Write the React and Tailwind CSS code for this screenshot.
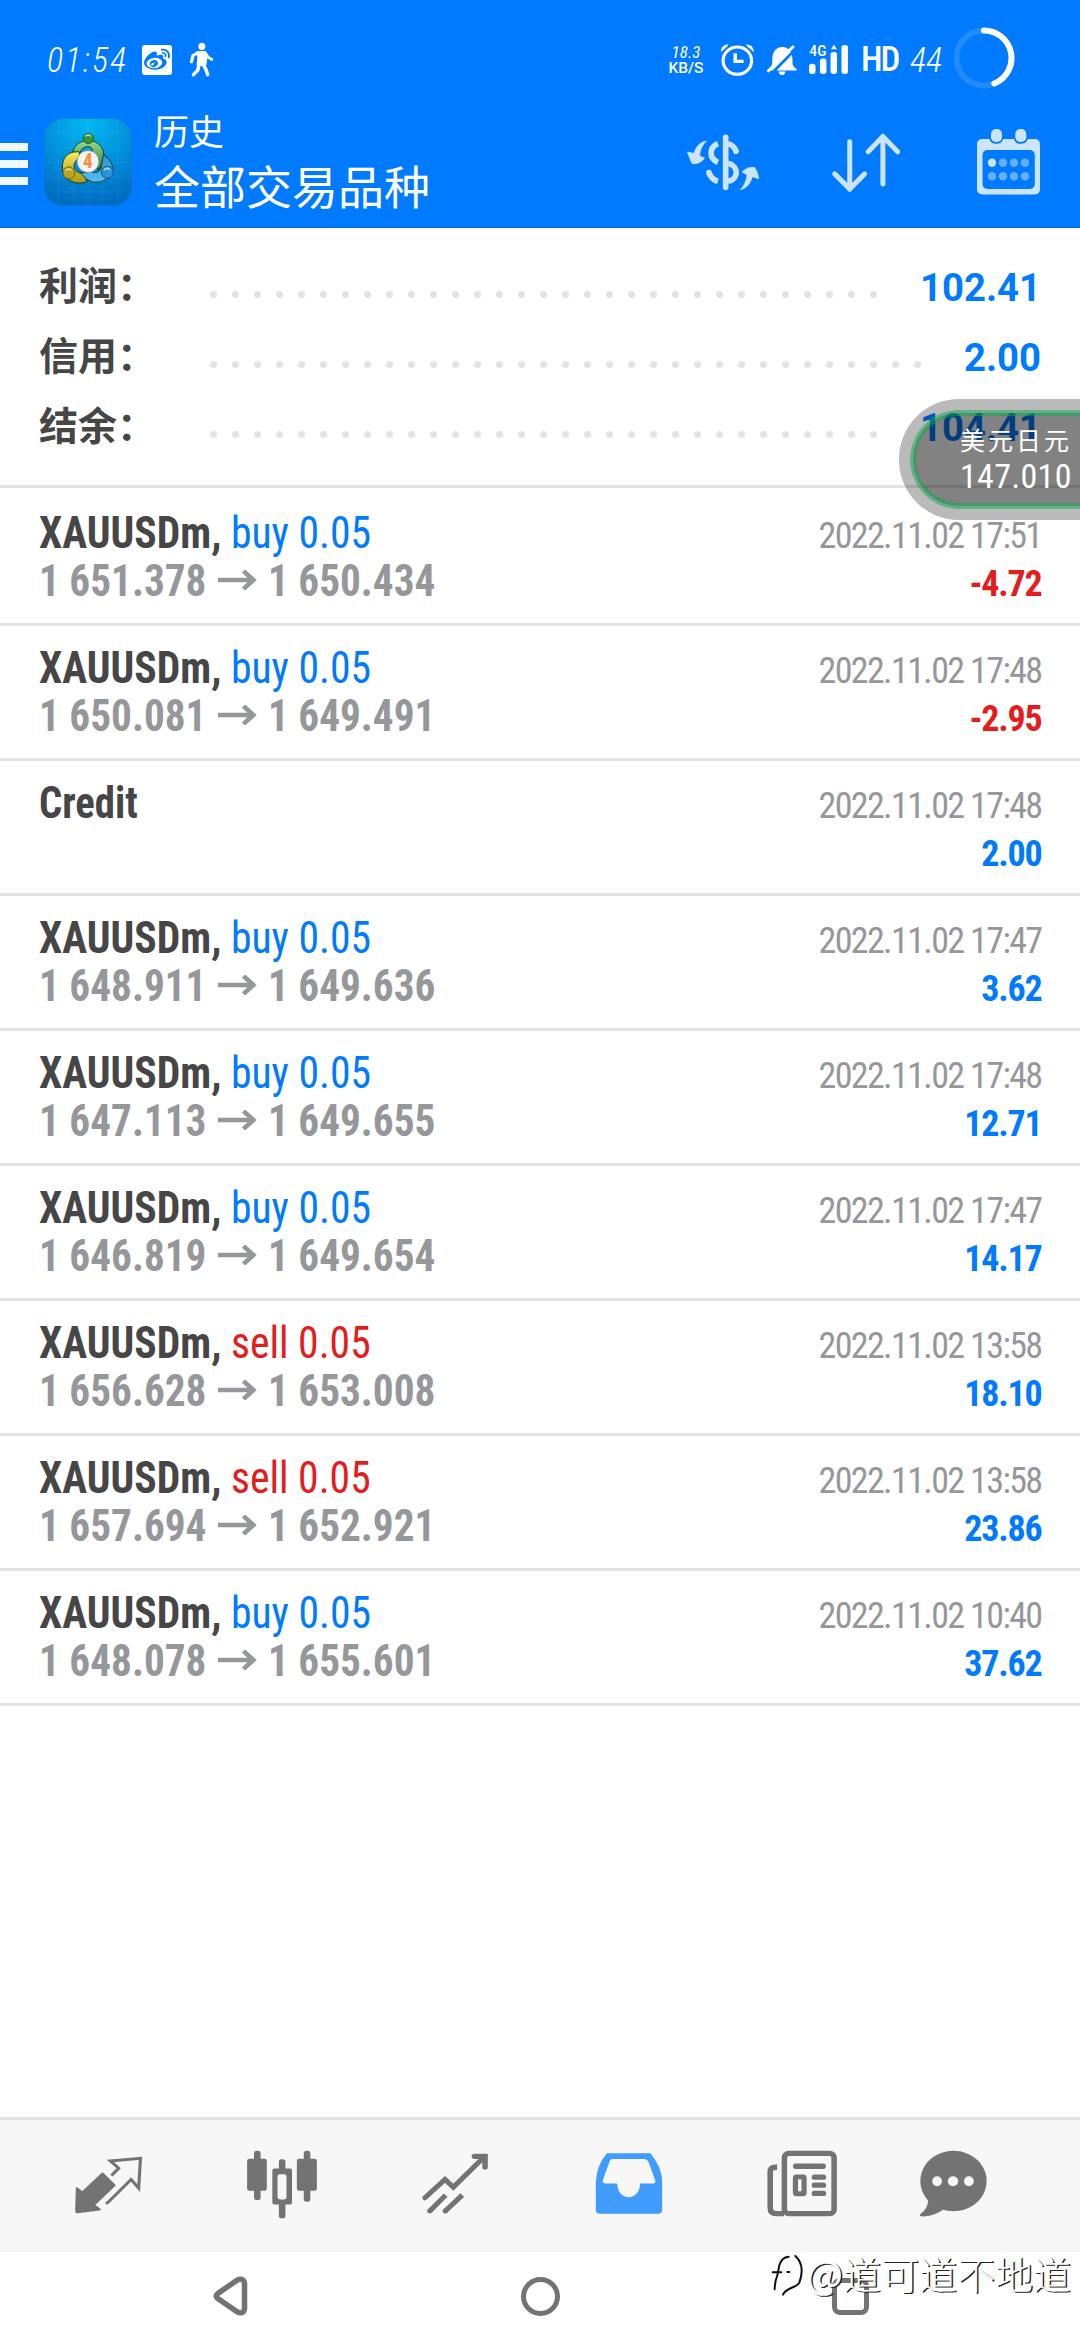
import React from "react";
import { FaWeibo } from "react-icons/fa";

const summary = [
  { label: "利润：", value: "102.41", dots: 31 },
  { label: "信用：", value: "2.00", dots: 33 },
  { label: "结余：", value: "104.41", dots: 31 },
];

const deals = [
  { symbol: "XAUUSDm", side: "buy", volume: "0.05", open: "1 651.378", close: "1 650.434", time: "2022.11.02 17:51", profit: "-4.72" },
  { symbol: "XAUUSDm", side: "buy", volume: "0.05", open: "1 650.081", close: "1 649.491", time: "2022.11.02 17:48", profit: "-2.95" },
  { symbol: "Credit", time: "2022.11.02 17:48", profit: "2.00" },
  { symbol: "XAUUSDm", side: "buy", volume: "0.05", open: "1 648.911", close: "1 649.636", time: "2022.11.02 17:47", profit: "3.62" },
  { symbol: "XAUUSDm", side: "buy", volume: "0.05", open: "1 647.113", close: "1 649.655", time: "2022.11.02 17:48", profit: "12.71" },
  { symbol: "XAUUSDm", side: "buy", volume: "0.05", open: "1 646.819", close: "1 649.654", time: "2022.11.02 17:47", profit: "14.17" },
  { symbol: "XAUUSDm", side: "sell", volume: "0.05", open: "1 656.628", close: "1 653.008", time: "2022.11.02 13:58", profit: "18.10" },
  { symbol: "XAUUSDm", side: "sell", volume: "0.05", open: "1 657.694", close: "1 652.921", time: "2022.11.02 13:58", profit: "23.86" },
  { symbol: "XAUUSDm", side: "buy", volume: "0.05", open: "1 648.078", close: "1 655.601", time: "2022.11.02 10:40", profit: "37.62" },
];

const WalkIcon = () => (
  <svg viewBox="548 126 72 104" preserveAspectRatio="none" className="h-[35px] w-[25px]" fill="none" stroke="#fff" strokeLinecap="round" strokeLinejoin="round">
    <ellipse cx="585" cy="139" rx="10" ry="10.5" fill="#fff" stroke="none" />
    <path d="M573 156h20l6 10-4 28h-22l2-22z" fill="#fff" strokeWidth="6" />
    <path d="M574 157l-15 10-4 18" strokeWidth="9" />
    <path d="M594 157l10 15 10 6" strokeWidth="8" />
    <path d="M577 194l-4 16-12 13M590 194l6 12 6 17" strokeWidth="10" />
  </svg>
);

const AlarmIcon = () => (
  <svg viewBox="525 130 95 96" preserveAspectRatio="none" className="h-8 w-[33px]" fill="none" stroke="#fff">
    <ellipse cx="572" cy="180" rx="41" ry="41" strokeWidth="9" />
    <path d="M566 158v24h24" strokeWidth="10" />
    <path d="M528 148a18 18 0 0 1 14-14l-1 2zM616 148a18 18 0 0 0-14-14l1 2z" strokeWidth="5" />
  </svg>
);

const BellOffIcon = () => (
  <svg viewBox="654 130 92 97" preserveAspectRatio="none" className="h-8 w-8">
    <path d="M664 206q8-8 8-20v-12q2-34 29-36 27 2 29 36v12q0 12 12 20v4h-78z" fill="#fff" />
    <path d="M690 213h20q-2 11-10 11t-10-11z" fill="#fff" />
    <path d="M666 224L746 138" stroke="#007aff" strokeWidth="8" />
    <path d="M658 214L734 136" stroke="#fff" strokeWidth="8" />
  </svg>
);

const SignalIcon = () => (
  <svg viewBox="776 132 120 94" preserveAspectRatio="none" className="h-[31px] w-[41px]" fill="#fff">
    <rect x="779" y="192" width="19" height="31" rx="8" />
    <rect x="811" y="176" width="19" height="47" rx="8" />
    <rect x="842" y="156" width="19" height="67" rx="8" />
    <rect x="874" y="135" width="19" height="88" rx="8" />
    <path d="M852 134l9 14h-18z" />
    <text x="780" y="168" fontSize="43" fontWeight="500" textLength="50" lengthAdjust="spacingAndGlyphs" fontFamily="Roboto Condensed, sans-serif">4G</text>
  </svg>
);

const BatteryRing = () => (
  <svg viewBox="0 0 62 62" className="size-[62px]" fill="none" strokeWidth="6">
    <circle cx="31" cy="31" r="27.5" stroke="#fff" strokeOpacity="0.13" />
    <path d="M31 3.5A27.5 27.5 0 0 1 41.3 56.5" stroke="#fff" strokeLinecap="round" />
  </svg>
);

const AppLogo = () => (
  <svg viewBox="132 25 264 263" className="size-[88px] shrink-0">
    <defs>
      <radialGradient id="sky" cx="0.5" cy="0.05" r="1">
        <stop offset="0" stopColor="#00b9f0" />
        <stop offset="0.5" stopColor="#0090dc" />
        <stop offset="1" stopColor="#0067bd" />
      </radialGradient>
      <linearGradient id="green" x1="0" y1="0" x2="0" y2="1">
        <stop offset="0" stopColor="#9bd68d" />
        <stop offset="1" stopColor="#1c8a2c" />
      </linearGradient>
      <linearGradient id="gold" x1="0" y1="0" x2="0" y2="1">
        <stop offset="0" stopColor="#f3ea5e" />
        <stop offset="1" stopColor="#a8990f" />
      </linearGradient>
      <linearGradient id="azure" x1="0" y1="0" x2="0" y2="1">
        <stop offset="0" stopColor="#2f8fd8" />
        <stop offset="1" stopColor="#56c0f2" />
      </linearGradient>
    </defs>
    <rect x="133" y="26" width="262" height="261" rx="56" fill="url(#sky)" stroke="#0a7cc4" strokeWidth="2" />
    <path d="M176 28v256M220 26v260M264 26v260M308 26v260M352 28v256M134 70h260M134 114h260M134 158h260M134 202h260M134 246h260" stroke="#fff" strokeOpacity="0.1" strokeWidth="2" />
    <g stroke="#10402a" strokeWidth="3">
      <path d="M218 136C216 78 312 76 311 138Q310 160 296 182L276 150Q286 112 264 110 244 112 240 130z" fill="url(#green)" />
      <path d="M238 126C190 122 180 162 192 198Q222 230 262 216L248 190Q226 190 222 170 222 150 240 146z" fill="url(#gold)" />
      <path d="M310 134C342 152 346 192 324 206Q276 236 242 190L270 184Q296 196 304 172z" fill="url(#azure)" />
    </g>
    <ellipse cx="265" cy="86" rx="16" ry="15" fill="#37953f" stroke="#14602a" strokeWidth="3" />
    <circle cx="207" cy="189" r="18" fill="#b9a61c" stroke="#6d6510" strokeWidth="3" />
    <circle cx="322" cy="187" r="18" fill="#2d93d6" stroke="#0d5590" strokeWidth="3" />
    <path d="M257 78q8-6 15 0M198 181q8-7 15 0M314 179q8-7 15 0" stroke="#fff" strokeOpacity="0.6" strokeWidth="5" fill="none" strokeLinecap="round" />
    <circle cx="264" cy="155" r="33" fill="#f4f4f2" stroke="#777" strokeWidth="2" />
    <text x="264" y="176" textAnchor="middle" fontSize="58" fontWeight="700" fontFamily="Roboto Condensed, sans-serif" fill="#f7903a">4</text>
  </svg>
);

const DollarIcon = () => (
  <svg viewBox="75 33 222 174" className="h-[58px] w-[74px]" fill="none" stroke="#cce4ff" strokeWidth="17">
    <path d="M194 46v150" strokeLinecap="round" />
    <path d="M171 65C144 76 142 108 171 121" />
    <path d="M144 152Q150 172 171 178" />
    <path d="M144 152h.1" strokeLinecap="round" />
    <path d="M201 65Q220 70 225 88" />
    <path d="M225 88h.1" strokeLinecap="round" />
    <path d="M201 124C234 132 234 172 201 178" />
    <g fill="#cce4ff" stroke="#cce4ff" strokeWidth="2" strokeLinejoin="round">
      <path d="M136 57C116 60 104 76 99 94L79 90L92 123Q96 127 102 125Q120 124 131 108L116 102C117 82 124 70 136 57z" />
      <path d="M238 203C256 200 269 184 274 164L293 170Q292 152 281 136Q258 134 243 150L258 158C256 178 250 190 238 203z" />
    </g>
  </svg>
);

const SortIcon = () => (
  <svg viewBox="510 33 206 182" className="h-[61px] w-[69px]" fill="none" stroke="#cce4ff" strokeWidth="15" strokeLinecap="round" strokeLinejoin="round">
    <path d="M566 62v142M521 158l45 45 44-45" />
    <path d="M665 46v142M621 92l44-46 44 46" />
  </svg>
);

const CalendarIcon = () => (
  <svg viewBox="976 127 66 68" className="h-[68px] w-[66px]">
    <rect x="977" y="138" width="63" height="55.5" rx="5" fill="#cce4ff" />
    <rect x="982.5" y="149" width="52.3" height="39" rx="5" fill="#007aff" />
    <rect x="989.3" y="126.5" width="14" height="16.3" rx="6" fill="#007aff" />
    <rect x="1013.8" y="126.5" width="14" height="16.3" rx="6" fill="#007aff" />
    <rect x="991" y="128" width="11" height="13" rx="4.8" fill="#cce4ff" />
    <rect x="1015.3" y="128" width="11" height="13" rx="4.8" fill="#cce4ff" />
    <g fill="#66afff">
      <circle cx="992" cy="161.7" r="4.2" fill="#cce4ff" />
      <circle cx="1003" cy="161.7" r="4.2" />
      <circle cx="1014" cy="161.7" r="4.2" />
      <circle cx="1025" cy="161.7" r="4.2" />
      <circle cx="992" cy="175.3" r="4.2" />
      <circle cx="1003" cy="175.3" r="4.2" />
      <circle cx="1014" cy="175.3" r="4.2" />
      <circle cx="1025" cy="175.3" r="4.2" />
    </g>
  </svg>
);

const TabIcon = ({ x, children }) => (
  <svg viewBox={`${x} 148 220 220`} preserveAspectRatio="none" className="h-[73px] w-[76px]" fill="none">
    {children}
  </svg>
);

const QuotesIcon = () => (
  <TabIcon x={205}>
    <path d="M222 263l16 13 58-57 35 35-60 60 17 13-64 9q-4 0-4-4z" fill="#737373" stroke="#737373" strokeWidth="6" strokeLinejoin="round" />
    <path d="M322 225l21-22-24-22 87-8-5 90-22-26-68 70" stroke="#737373" strokeWidth="9" />
    <path d="M309 308h.1" stroke="#737373" strokeWidth="9" strokeLinecap="round" />
  </TabIcon>
);

const CandlesIcon = () => (
  <TabIcon x={706}>
    <g fill="#737373">
      <rect x="735" y="150" width="19" height="149" rx="8" />
      <rect x="715" y="174" width="57" height="97" rx="7" />
      <rect x="879" y="150" width="19" height="154" rx="8" />
      <rect x="859" y="174" width="58" height="97" rx="7" />
      <rect x="807" y="176" width="19" height="178" rx="8" />
      <rect x="788" y="204" width="57" height="108" rx="6" />
    </g>
    <rect x="803" y="221" width="26" height="76" rx="7" fill="#f7f7f7" />
  </TabIcon>
);

const TrendIcon = () => (
  <TabIcon x={1208}>
    <g stroke="#737373" strokeWidth="15">
      <path d="M1231 292l58-55 24 23 90-92" strokeLinecap="round" />
      <path d="M1374 167h31v32" strokeLinecap="round" strokeWidth="16" />
      <path d="M1245 332l46-48M1290 332l49-48" />
      <path d="M1245 332h.1M1290 332h.1" strokeLinecap="round" />
    </g>
  </TabIcon>
);

const InboxIcon = () => (
  <TabIcon x={144}>
    <path fillRule="evenodd" fill="#409cff" d="M190 158H316Q350 200 350 245V328Q350 340 338 340H170Q158 340 158 328V245Q160 195 190 158zM201 176Q197 184 178 240Q177 249 186 249H220C220 304 286 304 286 249H324Q332 249 330 240L310 183Q306 176 298 175H208Q203 175 201 176z" />
  </TabIcon>
);

const NewsIcon = () => (
  <TabIcon x={647}>
    <rect x="706" y="158" width="144" height="182" rx="13" stroke="#737373" strokeWidth="16" />
    <path d="M685 200h-4q-16 0-16 14v108q0 18 18 18h22" stroke="#737373" strokeWidth="16" />
    <path d="M739 197h79" stroke="#737373" strokeWidth="16" strokeLinecap="round" />
    <rect x="738" y="229" width="25" height="51" rx="3" stroke="#737373" strokeWidth="15" />
    <path d="M793 230h26M793 254h26M793 279h26" stroke="#737373" strokeWidth="16" strokeLinecap="round" />
  </TabIcon>
);

const ChatIcon = () => (
  <TabIcon x={1089}>
    <path d="M1127 300A96 91 0 1 1 1171 328Q1140 349 1108 348 1100 347 1105 341 1127 323 1127 300z" fill="#737373" />
    <ellipse cx="1153" cy="242" rx="14" ry="15" fill="#f7f7f7" />
    <ellipse cx="1199" cy="242" rx="15" ry="15" fill="#f7f7f7" />
    <ellipse cx="1245" cy="242" rx="14" ry="15" fill="#f7f7f7" />
  </TabIcon>
);

const Arrow = () => (
  <svg viewBox="0 0 40 20" className="mx-[12px] inline-block h-[20px] w-[43px] align-[6px]" preserveAspectRatio="none" fill="none" stroke="#95979b" strokeWidth="4.6">
    <path d="M0 10h37M26 1l10 9-10 9" />
  </svg>
);

const StatusBar = () => (
  <div className="flex h-[104px] items-center pt-[15px] pl-[47px] text-white">
    <span className="w-[95px] [font-family:'Roboto_Condensed'] text-[34px] leading-none font-light tracking-[2px] italic">01:54</span>
    <span className="flex h-[30px] w-[30px] items-center justify-center rounded-[3px] bg-white">
      <FaWeibo className="size-[26px] text-[#007aff]" />
    </span>
    <span className="ml-[17px]"><WalkIcon /></span>
    <div className="ml-auto flex items-center pr-[65px]">
      <div className="flex w-[38px] flex-col items-center [font-family:Roboto]">
        <span className="[font-family:'Roboto_Condensed'] text-[17px] leading-[16px] italic">18.3</span>
        <span className="text-[15.5px] leading-[16px] font-medium">KB/S</span>
      </div>
      <span className="ml-[16px]"><AlarmIcon /></span>
      <span className="ml-[12px]"><BellOffIcon /></span>
      <span className="ml-[10px]"><SignalIcon /></span>
      <span className="ml-[12px] w-[38px] [font-family:'Roboto_Condensed'] text-[35px] leading-none font-medium tracking-[-2px]">HD</span>
      <span className="ml-[11px] w-[36px] [font-family:'Roboto_Condensed'] text-[34px] leading-none font-light italic">44</span>
      <span className="-mt-[4px] ml-[7px]"><BatteryRing /></span>
    </div>
  </div>
);

const AppBar = () => (
  <div className="flex h-[116px] items-center">
    <div className="mt-[4px] flex w-[28px] flex-col gap-[9.5px]">
      <span className="h-[7.5px] bg-[#f0f7ff]" />
      <span className="h-[7.5px] bg-[#f0f7ff]" />
      <span className="h-[7.5px] bg-[#f0f7ff]" />
    </div>
    <div className="ml-[16px]"><AppLogo /></div>
    <div className="ml-[22px] flex flex-col text-white [font-family:'Noto_Sans_CJK_SC',sans-serif]">
      <span className="text-[35px] leading-[50px]">历史</span>
      <span className="mb-[6px] text-[46px] leading-[58px]">全部交易品种</span>
    </div>
    <div className="ml-auto flex items-center pr-[38px]">
      <DollarIcon />
      <span className="ml-[71px]"><SortIcon /></span>
      <span className="ml-[76px]"><CalendarIcon /></span>
    </div>
  </div>
);

const DealRow = ({ deal }) => (
  <div className="h-[135px] border-b-[3px] border-[#e3e3e4] pt-[17.5px] pr-[38.5px] pl-[39px] [font-family:'Roboto_Condensed',sans-serif]">
    <div className="flex h-[48px] items-baseline justify-between leading-[48px]">
      <div className={`origin-left text-[45px] whitespace-nowrap ${deal.side ? "scale-x-[0.925]" : "scale-x-[0.905]"}`}>
        <span className="font-bold text-[#464646]">{deal.symbol}{deal.side && ","}</span>
        {deal.side && (
          <span className={deal.side === "buy" ? "text-[#007aff]" : "text-[#e31c1c]"}> {deal.side} {deal.volume}</span>
        )}
      </div>
      <span className="text-[36px] tracking-[-1.62px] text-[#95979b]">{deal.time}</span>
    </div>
    <div className="flex h-[48px] items-baseline justify-between leading-[48px]">
      <div className="origin-left scale-x-[0.917] text-[45px] font-bold whitespace-nowrap text-[#95979b]">
        {deal.open ? <>{deal.open}<Arrow />{deal.close}</> : <>&nbsp;</>}
      </div>
      <span className={`text-[36px] font-bold tracking-[-1.2px] ${deal.profit.startsWith("-") ? "text-[#e31c1c]" : "text-[#007aff]"}`}>{deal.profit}</span>
    </div>
  </div>
);

const PriceBubble = () => (
  <div className="absolute top-[399px] right-0 h-[121px] w-[181px] overflow-hidden rounded-l-[60px] bg-black/27">
    <div className="absolute inset-y-[14px] right-0 left-[14px] rounded-l-[47px] bg-black/30" />
    <div className="absolute inset-y-[11px] right-0 left-[11px] rounded-l-[50px] border-[6px] border-r-0 border-[rgba(15,167,77,0.5)]" />
    <div className="relative pt-[22px] pl-[61px] whitespace-nowrap text-white">
      <p className="[font-family:'Noto_Sans_CJK_SC',sans-serif] text-[25px] leading-[36px] tracking-[3px]">美元日元</p>
      <p className="[font-family:'Roboto_Condensed',sans-serif] text-[34px] leading-[38px] tracking-[0.3px]">147.010</p>
    </div>
  </div>
);

const Watermark = () => (
  <div className="absolute right-[9px] bottom-[42px] flex items-center text-white">
    <svg viewBox="25 45 105 135" className="mt-[6px] mr-[2px] h-[45px] w-[35px]" fill="none" stroke="#111" strokeWidth="6" strokeLinecap="round">
      <path d="M42 154Q42 130 50 112L56 82Q62 58 84 56M36 103h26M80 102h6" />
      <path d="M104 54C130 78 124 112 116 134 108 150 76 148 67 170" />
    </svg>
    <span className="[font-family:'Noto_Sans_CJK_SC',sans-serif] text-[38px] leading-[50px] font-light [text-shadow:1.5px_1px_0_#222]">
      <span className="font-medium">@</span>道可道不地道
    </span>
  </div>
);

const App = () => {
  return (
    <div className="relative flex h-[2340px] w-[1080px] flex-col overflow-hidden bg-white">
      <header className="h-[228px] border-b-2 border-[#006fe8] bg-[#007aff]">
        <StatusBar />
        <AppBar />
      </header>

      {/* Account summary */}
      <section className="h-[260px] border-b-[3px] border-[#e3e3e4] pt-[22px] pr-[39px] pl-[39px]">
        {summary.map((item) => (
          <div key={item.label} className="flex h-[70px] items-center">
            <span className="w-[171px] pb-[4px] [font-family:'Noto_Sans_CJK_SC',sans-serif] text-[39px] font-bold text-[#464646]">{item.label}</span>
            <div className="mt-[18px] flex gap-[15px]">
              {Array.from({ length: item.dots }, (_, i) => (
                <span key={i} className="size-[7px] rounded-full bg-[#e3e3e4]" />
              ))}
            </div>
            <span className="ml-auto pt-[6px] [font-family:Roboto,sans-serif] text-[38.3px] leading-none font-bold text-[#007aff]">{item.value}</span>
          </div>
        ))}
      </section>

      {/* Closed deals */}
      <main className="flex-1 pt-[3px]">
        {deals.map((deal, i) => (
          <DealRow key={i} deal={deal} />
        ))}
      </main>

      <nav className="flex h-[135px] items-center border-t-[3px] border-[#e3e3e4] bg-[#f7f7f7] pl-[22px]">
        <div className="flex w-[173.3px] justify-center"><QuotesIcon /></div>
        <div className="flex w-[173.3px] justify-center"><CandlesIcon /></div>
        <div className="flex w-[173.3px] justify-center"><TrendIcon /></div>
        <div className="flex w-[173.3px] justify-center"><InboxIcon /></div>
        <div className="flex w-[173.3px] justify-center"><NewsIcon /></div>
        <div className="flex w-[130px] justify-center"><ChatIcon /></div>
      </nav>

      {/* System navigation */}
      <div className="flex h-[88px] items-center px-[75px]">
        <div className="flex w-[310px] justify-center">
          <svg viewBox="0 0 36 42" className="h-[42px] w-[36px]" fill="none" stroke="#737373" strokeWidth="5.5" strokeLinejoin="round">
            <path d="M25 5.2Q31.500 2 32.500 8.500V33.500Q31.500 40 25 36.800L6.500 24Q2 21 6.500 18z" />
          </svg>
        </div>
        <div className="flex w-[310px] justify-center">
          <span className="size-[39px] rounded-full border-[5.5px] border-[#737373]" />
        </div>
        <div className="flex w-[310px] justify-center">
          <span className="size-[37px] rounded-[8px] border-[5.5px] border-[#737373]" />
        </div>
      </div>

      <PriceBubble />
      <Watermark />
    </div>
  );
};

export default App;
